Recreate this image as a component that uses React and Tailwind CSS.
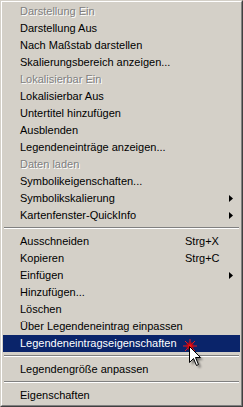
import React from "react";

const items = [
  { label: "Darstellung Ein", disabled: true },
  { label: "Darstellung Aus" },
  { label: "Nach Maßstab darstellen" },
  { label: "Skalierungsbereich anzeigen..." },
  { label: "Lokalisierbar Ein", disabled: true },
  { label: "Lokalisierbar Aus" },
  { label: "Untertitel hinzufügen" },
  { label: "Ausblenden" },
  { label: "Legendeneinträge anzeigen..." },
  { label: "Daten laden", disabled: true },
  { label: "Symbolikeigenschaften..." },
  { label: "Symbolikskalierung", submenu: true },
  { label: "Kartenfenster-QuickInfo", submenu: true },
  { separator: true },
  { label: "Ausschneiden", shortcut: "Strg+X" },
  { label: "Kopieren", shortcut: "Strg+C" },
  { label: "Einfügen", submenu: true },
  { label: "Hinzufügen..." },
  { label: "Löschen" },
  { label: "Über Legendeneintrag einpassen" },
  { label: "Legendeneintragseigenschaften", active: true },
  { separator: true },
  { label: "Legendengröße anpassen" },
  { separator: true },
  { label: "Eigenschaften" },
];

// small black triangle for submenus
const Arrow = ({ active }) => (
  <svg width="4" height="7" viewBox="0 0 4 7" className="ml-auto mr-[7px]">
    <path d="M0 0 L4 3.5 L0 7 Z" fill={active ? "#fff" : "#000"} />
  </svg>
);

const MenuItem = ({ item }) => {
  if (item.separator) {
    return (
      <div className="h-[9px] pt-[3px] px-[1px]">
        <div className="h-[2px] border-t border-b border-t-[#808080] border-b-white" />
      </div>
    );
  }

  let color = "text-black";
  if (item.disabled) color = "text-[#808080] [text-shadow:1px_1px_0_#fff]";
  if (item.active) color = "text-white bg-[#0a246a]";

  return (
    <div className={`h-[17px] flex items-center pl-[17px] ${color}`}>
      <span className="w-[165px] shrink-0 whitespace-nowrap">{item.label}</span>
      {item.shortcut && <span className="whitespace-nowrap">{item.shortcut}</span>}
      {item.submenu && <Arrow active={item.active} />}
    </div>
  );
};

// mouse pointer with the red click sparkle
const Pointer = () => (
  <svg
    width="30"
    height="36"
    viewBox="0 0 30 36"
    className="absolute left-[176px] top-[333px] pointer-events-none"
  >
    <defs>
      <radialGradient id="glow">
        <stop offset="0%" stopColor="#ff2020" stopOpacity="1" />
        <stop offset="45%" stopColor="#e00000" stopOpacity="0.8" />
        <stop offset="100%" stopColor="#c00000" stopOpacity="0" />
      </radialGradient>
      <filter id="blur" x="-50%" y="-50%" width="200%" height="200%">
        <feGaussianBlur stdDeviation="1.2" />
      </filter>
    </defs>
    <g stroke="#ff1a1a" strokeWidth="1" opacity="0.9">
      <line x1="6" y1="12" x2="20" y2="12" />
      <line x1="13" y1="5" x2="13" y2="19" />
      <line x1="8" y1="7" x2="18" y2="17" />
      <line x1="18" y1="7" x2="8" y2="17" />
    </g>
    <circle cx="13" cy="12" r="5" fill="url(#glow)" />
    {/* shadow */}
    <path
      d="M15 15 L15 31 L19 27 L22 34 L24 33 L21 26 L26 26 Z"
      fill="#000"
      opacity="0.45"
      filter="url(#blur)"
    />
    <path
      d="M12.5 12.5 L12.5 28.5 L16.5 24.5 L19.5 31.5 L21.5 30.5 L18.5 23.5 L23.5 23.5 Z"
      fill="#fff"
      stroke="#000"
      strokeWidth="1"
      strokeLinejoin="miter"
    />
  </svg>
);

export default function App() {
  return (
    <div className="relative w-[243px] h-[407px] bg-[#d4d0c8] border border-t-[#d4d0c8] border-l-[#d4d0c8] border-r-[#404040] border-b-[#404040] font-['Liberation_Sans',Arial,sans-serif] text-[11px] leading-none select-none">
      <div className="h-full border border-t-white border-l-white border-r-[#808080] border-b-[#808080] p-[1px]">
        {items.map((item, i) => (
          <MenuItem key={i} item={item} />
        ))}
      </div>
      <Pointer />
    </div>
  );
}
